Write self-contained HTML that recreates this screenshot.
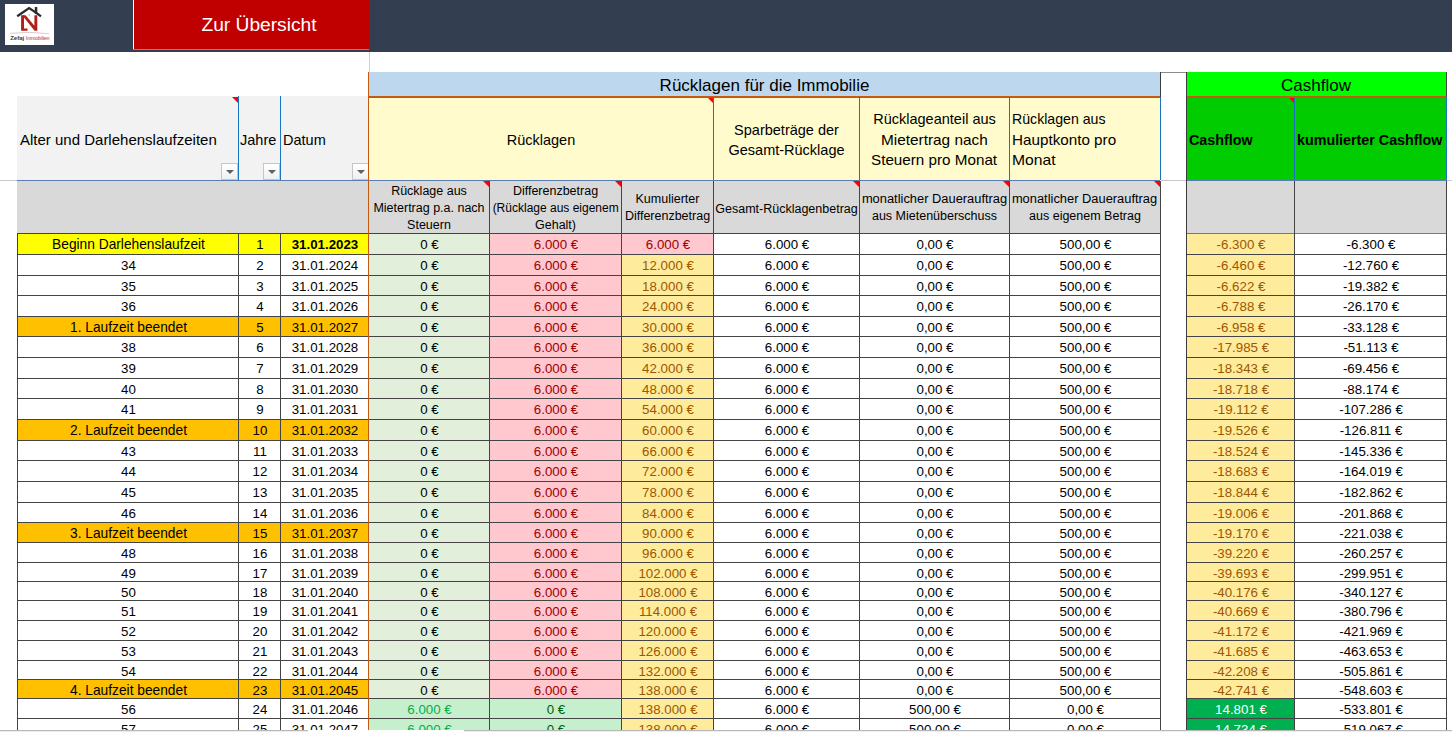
<!DOCTYPE html>
<html><head><meta charset="utf-8"><title>Rücklagen</title>
<style>
html,body{margin:0;padding:0;background:#fff;}
body{width:1452px;height:732px;overflow:hidden;position:relative;font-family:"Liberation Sans",sans-serif;}
#s>div{position:absolute;box-sizing:content-box;}
</style></head><body><div id="s">
<div style="left:0px;top:0px;width:1452px;height:52px;background:#333f50;"></div>
<div style="left:5px;top:4px;width:49px;height:41px;background:#fff;"></div>
<div style="left:133px;top:0px;width:1px;height:49px;background:#ffffff;"></div>
<div style="left:134px;top:0px;width:235px;height:49px;background:#c00000;"></div>
<div style="left:133px;top:49px;width:236px;height:1px;background:#8a8a8a;"></div>
<div style="left:150px;top:12.85px;width:218px;height:23px;font-size:19.2px;line-height:23px;text-align:center;color:#fff;font-weight:normal;white-space:nowrap;">Zur Übersicht</div>
<div style="left:369px;top:52px;width:1px;height:20px;background:#d0d0d0;"></div>
<div style="left:0px;top:180px;width:17px;height:1px;background:#c8c8c8;"></div>
<div style="left:1447px;top:180px;width:5px;height:1px;background:#c8c8c8;"></div>
<div style="left:1161px;top:180px;width:25px;height:1px;background:#c8c8c8;"></div>
<div style="left:369px;top:72px;width:791px;height:24px;background:#bdd7ee;"></div>
<div style="left:369px;top:76.11px;width:791px;height:20px;font-size:17px;line-height:20px;text-align:center;color:#000;font-weight:normal;white-space:nowrap;">Rücklagen für die Immobilie</div>
<div style="left:1187px;top:72px;width:259px;height:24px;background:#00ff00;"></div>
<div style="left:1186px;top:76.11px;width:260px;height:20px;font-size:17px;line-height:20px;text-align:center;color:#000;font-weight:normal;white-space:nowrap;">Cashflow</div>
<div style="left:1160px;top:72px;width:27px;height:1px;background:#8c8c8c;"></div>
<div style="left:17px;top:96px;width:351px;height:84px;background:#f2f2f2;"></div>
<div style="left:369px;top:97px;width:791px;height:83px;background:#fffbcc;"></div>
<div style="left:1187px;top:97px;width:259px;height:83px;background:#00cc00;"></div>
<div style="left:368px;top:96px;width:792px;height:2px;background:#c55a11;"></div>
<div style="left:1186px;top:96px;width:261px;height:2px;background:#c55a11;"></div>
<div style="left:238px;top:96px;width:1px;height:84px;background:#1a74c4;"></div>
<div style="left:280px;top:96px;width:1px;height:84px;background:#1a74c4;"></div>
<div style="left:713px;top:97px;width:1px;height:83px;background:#1a74c4;"></div>
<div style="left:859px;top:97px;width:1px;height:83px;background:#1a74c4;"></div>
<div style="left:1009px;top:97px;width:1px;height:83px;background:#1a74c4;"></div>
<div style="left:1160px;top:97px;width:1px;height:83px;background:#1a74c4;"></div>
<div style="left:1294px;top:97px;width:1px;height:83px;background:#1a74c4;"></div>
<div style="left:1446px;top:97px;width:1px;height:83px;background:#1a74c4;"></div>
<div style="left:17px;top:180px;width:1143px;height:1px;background:#5b7db5;"></div>
<div style="left:1186px;top:180px;width:261px;height:1px;background:#5b7db5;"></div>
<div style="left:20px;top:131.40px;width:218px;height:18px;font-size:15px;line-height:18px;text-align:left;color:#000;font-weight:normal;white-space:nowrap;">Alter und Darlehenslaufzeiten</div>
<div style="left:240px;top:132.08px;width:40px;height:17px;font-size:14.5px;line-height:17px;text-align:left;color:#000;font-weight:normal;white-space:nowrap;">Jahre</div>
<div style="left:283px;top:132.08px;width:85px;height:17px;font-size:14.5px;line-height:17px;text-align:left;color:#000;font-weight:normal;white-space:nowrap;">Datum</div>
<div style="left:369px;top:132.08px;width:344px;height:17px;font-size:14.5px;line-height:17px;text-align:center;color:#000;font-weight:normal;white-space:nowrap;">Rücklagen</div>
<div style="left:714px;top:119.53px;width:145px;height:41.0px;font-size:14.5px;line-height:20.5px;text-align:center;color:#000;font-weight:normal;white-space:nowrap;">Sparbeträge der<br>Gesamt-Rücklage</div>
<div style="left:860px;top:108.93px;width:149px;height:62.099999999999994px;font-size:14.5px;line-height:20.7px;text-align:center;color:#000;font-weight:normal;white-space:nowrap;">Rücklageanteil aus<br><span style="display:inline-block;transform:scaleX(1.06);transform-origin:center">Mietertrag nach</span><br><span style="display:inline-block;transform:scaleX(1.05);transform-origin:center">Steuern pro Monat</span></div>
<div style="left:1012px;top:108.93px;width:148px;height:62.099999999999994px;font-size:14.5px;line-height:20.7px;text-align:left;color:#000;font-weight:normal;white-space:nowrap;"><span style="display:inline-block;transform:scaleX(0.975);transform-origin:left">Rücklagen aus</span><br><span style="display:inline-block;transform:scaleX(1.05);transform-origin:left">Hauptkonto pro</span><br><span style="display:inline-block;transform:scaleX(1.08);transform-origin:left">Monat</span></div>
<div style="left:1189px;top:131.75px;width:105px;height:17px;font-size:14.3px;line-height:17px;text-align:left;color:#000;font-weight:bold;white-space:nowrap;">Cashflow</div>
<div style="left:1297px;top:131.75px;width:149px;height:17px;font-size:14.3px;line-height:17px;text-align:left;color:#000;font-weight:bold;white-space:nowrap;">kumulierter Cashflow</div>
<div style="left:232px;top:97px;width:0;height:0;border-top:6px solid #f00;border-left:6px solid transparent;"></div>
<div style="left:708px;top:98px;width:0;height:0;border-top:5px solid #f00;border-left:5px solid transparent;"></div>
<div style="left:1289px;top:98px;width:0;height:0;border-top:5px solid #f00;border-left:5px solid transparent;"></div>
<div style="left:221px;top:163px;width:15px;height:15px;border:1px solid #c6c6c6;background:linear-gradient(#fff,#eef0f3);"></div>
<div style="left:226px;top:170px;width:0;height:0;border-top:4px solid #606060;border-left:4px solid transparent;border-right:4px solid transparent;"></div>
<div style="left:263px;top:163px;width:15px;height:15px;border:1px solid #c6c6c6;background:linear-gradient(#fff,#eef0f3);"></div>
<div style="left:268px;top:170px;width:0;height:0;border-top:4px solid #606060;border-left:4px solid transparent;border-right:4px solid transparent;"></div>
<div style="left:352px;top:163px;width:15px;height:15px;border:1px solid #c6c6c6;background:linear-gradient(#fff,#eef0f3);"></div>
<div style="left:357px;top:170px;width:0;height:0;border-top:4px solid #606060;border-left:4px solid transparent;border-right:4px solid transparent;"></div>
<div style="left:17px;top:181px;width:351px;height:52px;background:#d9d9d9;"></div>
<div style="left:369px;top:181px;width:791px;height:52px;background:#d9d9d9;"></div>
<div style="left:1187px;top:181px;width:259px;height:52px;background:#d9d9d9;"></div>
<div style="left:369px;top:182.87px;width:120px;height:51px;font-size:12.5px;line-height:17px;text-align:center;color:#000;font-weight:normal;white-space:nowrap;">Rücklage aus<br>Mietertrag p.a. nach<br>Steuern</div>
<div style="left:490px;top:182.87px;width:131px;height:51px;font-size:12.5px;line-height:17px;text-align:center;color:#000;font-weight:normal;white-space:nowrap;">Differenzbetrag<br><span style="display:inline-block;transform:scaleX(0.96);transform-origin:center">(Rücklage aus eigenem</span><br>Gehalt)</div>
<div style="left:622px;top:191.37px;width:91px;height:34px;font-size:12.5px;line-height:17px;text-align:center;color:#000;font-weight:normal;white-space:nowrap;">Kumulierter<br>Differenzbetrag</div>
<div style="left:714px;top:201.77px;width:145px;height:15px;font-size:12.5px;line-height:15px;text-align:center;color:#000;font-weight:normal;white-space:nowrap;">Gesamt-Rücklagenbetrag</div>
<div style="left:860px;top:191.37px;width:149px;height:34px;font-size:12.5px;line-height:17px;text-align:center;color:#000;font-weight:normal;white-space:nowrap;"><span style="display:inline-block;transform:scaleX(1.03);transform-origin:center">monatlicher Dauerauftrag</span><br>aus Mietenüberschuss</div>
<div style="left:1010px;top:191.37px;width:150px;height:34px;font-size:12.5px;line-height:17px;text-align:center;color:#000;font-weight:normal;white-space:nowrap;"><span style="display:inline-block;transform:scaleX(1.03);transform-origin:center">monatlicher Dauerauftrag</span><br>aus eigenem Betrag</div>
<div style="left:489px;top:181px;width:1px;height:52px;background:#444444;"></div>
<div style="left:621px;top:181px;width:1px;height:52px;background:#444444;"></div>
<div style="left:713px;top:181px;width:1px;height:52px;background:#444444;"></div>
<div style="left:859px;top:181px;width:1px;height:52px;background:#444444;"></div>
<div style="left:1009px;top:181px;width:1px;height:52px;background:#444444;"></div>
<div style="left:483px;top:181px;width:0;height:0;border-top:6px solid #f00;border-left:6px solid transparent;"></div>
<div style="left:615px;top:181px;width:0;height:0;border-top:6px solid #f00;border-left:6px solid transparent;"></div>
<div style="left:853px;top:181px;width:0;height:0;border-top:6px solid #f00;border-left:6px solid transparent;"></div>
<div style="left:1003px;top:181px;width:0;height:0;border-top:6px solid #f00;border-left:6px solid transparent;"></div>
<div style="left:1154px;top:181px;width:0;height:0;border-top:6px solid #f00;border-left:6px solid transparent;"></div>
<div style="left:17px;top:233px;width:351px;height:21px;background:#ffff00;"></div>
<div style="left:369px;top:233px;width:120px;height:21px;background:#e2efda;"></div>
<div style="left:489px;top:233px;width:132px;height:21px;background:#ffc7ce;"></div>
<div style="left:621px;top:233px;width:92px;height:21px;background:#ffc7ce;"></div>
<div style="left:1186px;top:233px;width:108px;height:21px;background:#ffeb9c;"></div>
<div style="left:18px;top:237.24px;width:221px;height:16px;font-size:13.75px;line-height:16px;text-align:center;color:#000;font-weight:normal;white-space:nowrap;">Beginn Darlehenslaufzeit</div>
<div style="left:239px;top:237.39px;width:42px;height:16px;font-size:13.3px;line-height:16px;text-align:center;color:#000;font-weight:normal;white-space:nowrap;">1</div>
<div style="left:281px;top:237.39px;width:88px;height:16px;font-size:13.3px;line-height:16px;text-align:center;color:#000;font-weight:bold;white-space:nowrap;">31.01.2023</div>
<div style="left:369px;top:237.39px;width:121px;height:16px;font-size:13.3px;line-height:16px;text-align:center;color:#000;font-weight:normal;white-space:nowrap;">0 €</div>
<div style="left:490px;top:237.39px;width:132px;height:16px;font-size:13.3px;line-height:16px;text-align:center;color:#9c0006;font-weight:normal;white-space:nowrap;">6.000 €</div>
<div style="left:622px;top:237.39px;width:92px;height:16px;font-size:13.3px;line-height:16px;text-align:center;color:#9c0006;font-weight:normal;white-space:nowrap;">6.000 €</div>
<div style="left:714px;top:237.39px;width:146px;height:16px;font-size:13.3px;line-height:16px;text-align:center;color:#000;font-weight:normal;white-space:nowrap;">6.000 €</div>
<div style="left:860px;top:237.39px;width:150px;height:16px;font-size:13.3px;line-height:16px;text-align:center;color:#000;font-weight:normal;white-space:nowrap;">0,00 €</div>
<div style="left:1010px;top:237.39px;width:151px;height:16px;font-size:13.3px;line-height:16px;text-align:center;color:#000;font-weight:normal;white-space:nowrap;">500,00 €</div>
<div style="left:1187px;top:237.39px;width:108px;height:16px;font-size:13.3px;line-height:16px;text-align:center;color:#9c5700;font-weight:normal;white-space:nowrap;">-6.300 €</div>
<div style="left:1295px;top:237.39px;width:152px;height:16px;font-size:13.3px;line-height:16px;text-align:center;color:#000;font-weight:normal;white-space:nowrap;">-6.300 €</div>
<div style="left:369px;top:254px;width:120px;height:21px;background:#e2efda;"></div>
<div style="left:489px;top:254px;width:132px;height:21px;background:#ffc7ce;"></div>
<div style="left:621px;top:254px;width:92px;height:21px;background:#ffeb9c;"></div>
<div style="left:1186px;top:254px;width:108px;height:21px;background:#ffeb9c;"></div>
<div style="left:18px;top:258.39px;width:221px;height:16px;font-size:13.3px;line-height:16px;text-align:center;color:#000;font-weight:normal;white-space:nowrap;">34</div>
<div style="left:239px;top:258.39px;width:42px;height:16px;font-size:13.3px;line-height:16px;text-align:center;color:#000;font-weight:normal;white-space:nowrap;">2</div>
<div style="left:281px;top:258.39px;width:88px;height:16px;font-size:13.3px;line-height:16px;text-align:center;color:#000;font-weight:normal;white-space:nowrap;">31.01.2024</div>
<div style="left:369px;top:258.39px;width:121px;height:16px;font-size:13.3px;line-height:16px;text-align:center;color:#000;font-weight:normal;white-space:nowrap;">0 €</div>
<div style="left:490px;top:258.39px;width:132px;height:16px;font-size:13.3px;line-height:16px;text-align:center;color:#9c0006;font-weight:normal;white-space:nowrap;">6.000 €</div>
<div style="left:622px;top:258.39px;width:92px;height:16px;font-size:13.3px;line-height:16px;text-align:center;color:#9c5700;font-weight:normal;white-space:nowrap;">12.000 €</div>
<div style="left:714px;top:258.39px;width:146px;height:16px;font-size:13.3px;line-height:16px;text-align:center;color:#000;font-weight:normal;white-space:nowrap;">6.000 €</div>
<div style="left:860px;top:258.39px;width:150px;height:16px;font-size:13.3px;line-height:16px;text-align:center;color:#000;font-weight:normal;white-space:nowrap;">0,00 €</div>
<div style="left:1010px;top:258.39px;width:151px;height:16px;font-size:13.3px;line-height:16px;text-align:center;color:#000;font-weight:normal;white-space:nowrap;">500,00 €</div>
<div style="left:1187px;top:258.39px;width:108px;height:16px;font-size:13.3px;line-height:16px;text-align:center;color:#9c5700;font-weight:normal;white-space:nowrap;">-6.460 €</div>
<div style="left:1295px;top:258.39px;width:152px;height:16px;font-size:13.3px;line-height:16px;text-align:center;color:#000;font-weight:normal;white-space:nowrap;">-12.760 €</div>
<div style="left:369px;top:275px;width:120px;height:20px;background:#e2efda;"></div>
<div style="left:489px;top:275px;width:132px;height:20px;background:#ffc7ce;"></div>
<div style="left:621px;top:275px;width:92px;height:20px;background:#ffeb9c;"></div>
<div style="left:1186px;top:275px;width:108px;height:20px;background:#ffeb9c;"></div>
<div style="left:18px;top:279.19px;width:221px;height:16px;font-size:13.3px;line-height:16px;text-align:center;color:#000;font-weight:normal;white-space:nowrap;">35</div>
<div style="left:239px;top:279.19px;width:42px;height:16px;font-size:13.3px;line-height:16px;text-align:center;color:#000;font-weight:normal;white-space:nowrap;">3</div>
<div style="left:281px;top:279.19px;width:88px;height:16px;font-size:13.3px;line-height:16px;text-align:center;color:#000;font-weight:normal;white-space:nowrap;">31.01.2025</div>
<div style="left:369px;top:279.19px;width:121px;height:16px;font-size:13.3px;line-height:16px;text-align:center;color:#000;font-weight:normal;white-space:nowrap;">0 €</div>
<div style="left:490px;top:279.19px;width:132px;height:16px;font-size:13.3px;line-height:16px;text-align:center;color:#9c0006;font-weight:normal;white-space:nowrap;">6.000 €</div>
<div style="left:622px;top:279.19px;width:92px;height:16px;font-size:13.3px;line-height:16px;text-align:center;color:#9c5700;font-weight:normal;white-space:nowrap;">18.000 €</div>
<div style="left:714px;top:279.19px;width:146px;height:16px;font-size:13.3px;line-height:16px;text-align:center;color:#000;font-weight:normal;white-space:nowrap;">6.000 €</div>
<div style="left:860px;top:279.19px;width:150px;height:16px;font-size:13.3px;line-height:16px;text-align:center;color:#000;font-weight:normal;white-space:nowrap;">0,00 €</div>
<div style="left:1010px;top:279.19px;width:151px;height:16px;font-size:13.3px;line-height:16px;text-align:center;color:#000;font-weight:normal;white-space:nowrap;">500,00 €</div>
<div style="left:1187px;top:279.19px;width:108px;height:16px;font-size:13.3px;line-height:16px;text-align:center;color:#9c5700;font-weight:normal;white-space:nowrap;">-6.622 €</div>
<div style="left:1295px;top:279.19px;width:152px;height:16px;font-size:13.3px;line-height:16px;text-align:center;color:#000;font-weight:normal;white-space:nowrap;">-19.382 €</div>
<div style="left:369px;top:295px;width:120px;height:21px;background:#e2efda;"></div>
<div style="left:489px;top:295px;width:132px;height:21px;background:#ffc7ce;"></div>
<div style="left:621px;top:295px;width:92px;height:21px;background:#ffeb9c;"></div>
<div style="left:1186px;top:295px;width:108px;height:21px;background:#ffeb9c;"></div>
<div style="left:18px;top:299.39px;width:221px;height:16px;font-size:13.3px;line-height:16px;text-align:center;color:#000;font-weight:normal;white-space:nowrap;">36</div>
<div style="left:239px;top:299.39px;width:42px;height:16px;font-size:13.3px;line-height:16px;text-align:center;color:#000;font-weight:normal;white-space:nowrap;">4</div>
<div style="left:281px;top:299.39px;width:88px;height:16px;font-size:13.3px;line-height:16px;text-align:center;color:#000;font-weight:normal;white-space:nowrap;">31.01.2026</div>
<div style="left:369px;top:299.39px;width:121px;height:16px;font-size:13.3px;line-height:16px;text-align:center;color:#000;font-weight:normal;white-space:nowrap;">0 €</div>
<div style="left:490px;top:299.39px;width:132px;height:16px;font-size:13.3px;line-height:16px;text-align:center;color:#9c0006;font-weight:normal;white-space:nowrap;">6.000 €</div>
<div style="left:622px;top:299.39px;width:92px;height:16px;font-size:13.3px;line-height:16px;text-align:center;color:#9c5700;font-weight:normal;white-space:nowrap;">24.000 €</div>
<div style="left:714px;top:299.39px;width:146px;height:16px;font-size:13.3px;line-height:16px;text-align:center;color:#000;font-weight:normal;white-space:nowrap;">6.000 €</div>
<div style="left:860px;top:299.39px;width:150px;height:16px;font-size:13.3px;line-height:16px;text-align:center;color:#000;font-weight:normal;white-space:nowrap;">0,00 €</div>
<div style="left:1010px;top:299.39px;width:151px;height:16px;font-size:13.3px;line-height:16px;text-align:center;color:#000;font-weight:normal;white-space:nowrap;">500,00 €</div>
<div style="left:1187px;top:299.39px;width:108px;height:16px;font-size:13.3px;line-height:16px;text-align:center;color:#9c5700;font-weight:normal;white-space:nowrap;">-6.788 €</div>
<div style="left:1295px;top:299.39px;width:152px;height:16px;font-size:13.3px;line-height:16px;text-align:center;color:#000;font-weight:normal;white-space:nowrap;">-26.170 €</div>
<div style="left:17px;top:316px;width:351px;height:20px;background:#ffc000;"></div>
<div style="left:369px;top:316px;width:120px;height:20px;background:#e2efda;"></div>
<div style="left:489px;top:316px;width:132px;height:20px;background:#ffc7ce;"></div>
<div style="left:621px;top:316px;width:92px;height:20px;background:#ffeb9c;"></div>
<div style="left:1186px;top:316px;width:108px;height:20px;background:#ffeb9c;"></div>
<div style="left:18px;top:320.04px;width:221px;height:16px;font-size:13.75px;line-height:16px;text-align:center;color:#000;font-weight:normal;white-space:nowrap;">1. Laufzeit beendet</div>
<div style="left:239px;top:320.19px;width:42px;height:16px;font-size:13.3px;line-height:16px;text-align:center;color:#000;font-weight:normal;white-space:nowrap;">5</div>
<div style="left:281px;top:320.19px;width:88px;height:16px;font-size:13.3px;line-height:16px;text-align:center;color:#000;font-weight:normal;white-space:nowrap;">31.01.2027</div>
<div style="left:369px;top:320.19px;width:121px;height:16px;font-size:13.3px;line-height:16px;text-align:center;color:#000;font-weight:normal;white-space:nowrap;">0 €</div>
<div style="left:490px;top:320.19px;width:132px;height:16px;font-size:13.3px;line-height:16px;text-align:center;color:#9c0006;font-weight:normal;white-space:nowrap;">6.000 €</div>
<div style="left:622px;top:320.19px;width:92px;height:16px;font-size:13.3px;line-height:16px;text-align:center;color:#9c5700;font-weight:normal;white-space:nowrap;">30.000 €</div>
<div style="left:714px;top:320.19px;width:146px;height:16px;font-size:13.3px;line-height:16px;text-align:center;color:#000;font-weight:normal;white-space:nowrap;">6.000 €</div>
<div style="left:860px;top:320.19px;width:150px;height:16px;font-size:13.3px;line-height:16px;text-align:center;color:#000;font-weight:normal;white-space:nowrap;">0,00 €</div>
<div style="left:1010px;top:320.19px;width:151px;height:16px;font-size:13.3px;line-height:16px;text-align:center;color:#000;font-weight:normal;white-space:nowrap;">500,00 €</div>
<div style="left:1187px;top:320.19px;width:108px;height:16px;font-size:13.3px;line-height:16px;text-align:center;color:#9c5700;font-weight:normal;white-space:nowrap;">-6.958 €</div>
<div style="left:1295px;top:320.19px;width:152px;height:16px;font-size:13.3px;line-height:16px;text-align:center;color:#000;font-weight:normal;white-space:nowrap;">-33.128 €</div>
<div style="left:369px;top:336px;width:120px;height:21px;background:#e2efda;"></div>
<div style="left:489px;top:336px;width:132px;height:21px;background:#ffc7ce;"></div>
<div style="left:621px;top:336px;width:92px;height:21px;background:#ffeb9c;"></div>
<div style="left:1186px;top:336px;width:108px;height:21px;background:#ffeb9c;"></div>
<div style="left:18px;top:340.39px;width:221px;height:16px;font-size:13.3px;line-height:16px;text-align:center;color:#000;font-weight:normal;white-space:nowrap;">38</div>
<div style="left:239px;top:340.39px;width:42px;height:16px;font-size:13.3px;line-height:16px;text-align:center;color:#000;font-weight:normal;white-space:nowrap;">6</div>
<div style="left:281px;top:340.39px;width:88px;height:16px;font-size:13.3px;line-height:16px;text-align:center;color:#000;font-weight:normal;white-space:nowrap;">31.01.2028</div>
<div style="left:369px;top:340.39px;width:121px;height:16px;font-size:13.3px;line-height:16px;text-align:center;color:#000;font-weight:normal;white-space:nowrap;">0 €</div>
<div style="left:490px;top:340.39px;width:132px;height:16px;font-size:13.3px;line-height:16px;text-align:center;color:#9c0006;font-weight:normal;white-space:nowrap;">6.000 €</div>
<div style="left:622px;top:340.39px;width:92px;height:16px;font-size:13.3px;line-height:16px;text-align:center;color:#9c5700;font-weight:normal;white-space:nowrap;">36.000 €</div>
<div style="left:714px;top:340.39px;width:146px;height:16px;font-size:13.3px;line-height:16px;text-align:center;color:#000;font-weight:normal;white-space:nowrap;">6.000 €</div>
<div style="left:860px;top:340.39px;width:150px;height:16px;font-size:13.3px;line-height:16px;text-align:center;color:#000;font-weight:normal;white-space:nowrap;">0,00 €</div>
<div style="left:1010px;top:340.39px;width:151px;height:16px;font-size:13.3px;line-height:16px;text-align:center;color:#000;font-weight:normal;white-space:nowrap;">500,00 €</div>
<div style="left:1187px;top:340.39px;width:108px;height:16px;font-size:13.3px;line-height:16px;text-align:center;color:#9c5700;font-weight:normal;white-space:nowrap;">-17.985 €</div>
<div style="left:1295px;top:340.39px;width:152px;height:16px;font-size:13.3px;line-height:16px;text-align:center;color:#000;font-weight:normal;white-space:nowrap;">-51.113 €</div>
<div style="left:369px;top:357px;width:120px;height:21px;background:#e2efda;"></div>
<div style="left:489px;top:357px;width:132px;height:21px;background:#ffc7ce;"></div>
<div style="left:621px;top:357px;width:92px;height:21px;background:#ffeb9c;"></div>
<div style="left:1186px;top:357px;width:108px;height:21px;background:#ffeb9c;"></div>
<div style="left:18px;top:361.39px;width:221px;height:16px;font-size:13.3px;line-height:16px;text-align:center;color:#000;font-weight:normal;white-space:nowrap;">39</div>
<div style="left:239px;top:361.39px;width:42px;height:16px;font-size:13.3px;line-height:16px;text-align:center;color:#000;font-weight:normal;white-space:nowrap;">7</div>
<div style="left:281px;top:361.39px;width:88px;height:16px;font-size:13.3px;line-height:16px;text-align:center;color:#000;font-weight:normal;white-space:nowrap;">31.01.2029</div>
<div style="left:369px;top:361.39px;width:121px;height:16px;font-size:13.3px;line-height:16px;text-align:center;color:#000;font-weight:normal;white-space:nowrap;">0 €</div>
<div style="left:490px;top:361.39px;width:132px;height:16px;font-size:13.3px;line-height:16px;text-align:center;color:#9c0006;font-weight:normal;white-space:nowrap;">6.000 €</div>
<div style="left:622px;top:361.39px;width:92px;height:16px;font-size:13.3px;line-height:16px;text-align:center;color:#9c5700;font-weight:normal;white-space:nowrap;">42.000 €</div>
<div style="left:714px;top:361.39px;width:146px;height:16px;font-size:13.3px;line-height:16px;text-align:center;color:#000;font-weight:normal;white-space:nowrap;">6.000 €</div>
<div style="left:860px;top:361.39px;width:150px;height:16px;font-size:13.3px;line-height:16px;text-align:center;color:#000;font-weight:normal;white-space:nowrap;">0,00 €</div>
<div style="left:1010px;top:361.39px;width:151px;height:16px;font-size:13.3px;line-height:16px;text-align:center;color:#000;font-weight:normal;white-space:nowrap;">500,00 €</div>
<div style="left:1187px;top:361.39px;width:108px;height:16px;font-size:13.3px;line-height:16px;text-align:center;color:#9c5700;font-weight:normal;white-space:nowrap;">-18.343 €</div>
<div style="left:1295px;top:361.39px;width:152px;height:16px;font-size:13.3px;line-height:16px;text-align:center;color:#000;font-weight:normal;white-space:nowrap;">-69.456 €</div>
<div style="left:369px;top:378px;width:120px;height:20px;background:#e2efda;"></div>
<div style="left:489px;top:378px;width:132px;height:20px;background:#ffc7ce;"></div>
<div style="left:621px;top:378px;width:92px;height:20px;background:#ffeb9c;"></div>
<div style="left:1186px;top:378px;width:108px;height:20px;background:#ffeb9c;"></div>
<div style="left:18px;top:382.19px;width:221px;height:16px;font-size:13.3px;line-height:16px;text-align:center;color:#000;font-weight:normal;white-space:nowrap;">40</div>
<div style="left:239px;top:382.19px;width:42px;height:16px;font-size:13.3px;line-height:16px;text-align:center;color:#000;font-weight:normal;white-space:nowrap;">8</div>
<div style="left:281px;top:382.19px;width:88px;height:16px;font-size:13.3px;line-height:16px;text-align:center;color:#000;font-weight:normal;white-space:nowrap;">31.01.2030</div>
<div style="left:369px;top:382.19px;width:121px;height:16px;font-size:13.3px;line-height:16px;text-align:center;color:#000;font-weight:normal;white-space:nowrap;">0 €</div>
<div style="left:490px;top:382.19px;width:132px;height:16px;font-size:13.3px;line-height:16px;text-align:center;color:#9c0006;font-weight:normal;white-space:nowrap;">6.000 €</div>
<div style="left:622px;top:382.19px;width:92px;height:16px;font-size:13.3px;line-height:16px;text-align:center;color:#9c5700;font-weight:normal;white-space:nowrap;">48.000 €</div>
<div style="left:714px;top:382.19px;width:146px;height:16px;font-size:13.3px;line-height:16px;text-align:center;color:#000;font-weight:normal;white-space:nowrap;">6.000 €</div>
<div style="left:860px;top:382.19px;width:150px;height:16px;font-size:13.3px;line-height:16px;text-align:center;color:#000;font-weight:normal;white-space:nowrap;">0,00 €</div>
<div style="left:1010px;top:382.19px;width:151px;height:16px;font-size:13.3px;line-height:16px;text-align:center;color:#000;font-weight:normal;white-space:nowrap;">500,00 €</div>
<div style="left:1187px;top:382.19px;width:108px;height:16px;font-size:13.3px;line-height:16px;text-align:center;color:#9c5700;font-weight:normal;white-space:nowrap;">-18.718 €</div>
<div style="left:1295px;top:382.19px;width:152px;height:16px;font-size:13.3px;line-height:16px;text-align:center;color:#000;font-weight:normal;white-space:nowrap;">-88.174 €</div>
<div style="left:369px;top:398px;width:120px;height:21px;background:#e2efda;"></div>
<div style="left:489px;top:398px;width:132px;height:21px;background:#ffc7ce;"></div>
<div style="left:621px;top:398px;width:92px;height:21px;background:#ffeb9c;"></div>
<div style="left:1186px;top:398px;width:108px;height:21px;background:#ffeb9c;"></div>
<div style="left:18px;top:402.39px;width:221px;height:16px;font-size:13.3px;line-height:16px;text-align:center;color:#000;font-weight:normal;white-space:nowrap;">41</div>
<div style="left:239px;top:402.39px;width:42px;height:16px;font-size:13.3px;line-height:16px;text-align:center;color:#000;font-weight:normal;white-space:nowrap;">9</div>
<div style="left:281px;top:402.39px;width:88px;height:16px;font-size:13.3px;line-height:16px;text-align:center;color:#000;font-weight:normal;white-space:nowrap;">31.01.2031</div>
<div style="left:369px;top:402.39px;width:121px;height:16px;font-size:13.3px;line-height:16px;text-align:center;color:#000;font-weight:normal;white-space:nowrap;">0 €</div>
<div style="left:490px;top:402.39px;width:132px;height:16px;font-size:13.3px;line-height:16px;text-align:center;color:#9c0006;font-weight:normal;white-space:nowrap;">6.000 €</div>
<div style="left:622px;top:402.39px;width:92px;height:16px;font-size:13.3px;line-height:16px;text-align:center;color:#9c5700;font-weight:normal;white-space:nowrap;">54.000 €</div>
<div style="left:714px;top:402.39px;width:146px;height:16px;font-size:13.3px;line-height:16px;text-align:center;color:#000;font-weight:normal;white-space:nowrap;">6.000 €</div>
<div style="left:860px;top:402.39px;width:150px;height:16px;font-size:13.3px;line-height:16px;text-align:center;color:#000;font-weight:normal;white-space:nowrap;">0,00 €</div>
<div style="left:1010px;top:402.39px;width:151px;height:16px;font-size:13.3px;line-height:16px;text-align:center;color:#000;font-weight:normal;white-space:nowrap;">500,00 €</div>
<div style="left:1187px;top:402.39px;width:108px;height:16px;font-size:13.3px;line-height:16px;text-align:center;color:#9c5700;font-weight:normal;white-space:nowrap;">-19.112 €</div>
<div style="left:1295px;top:402.39px;width:152px;height:16px;font-size:13.3px;line-height:16px;text-align:center;color:#000;font-weight:normal;white-space:nowrap;">-107.286 €</div>
<div style="left:17px;top:419px;width:351px;height:21px;background:#ffc000;"></div>
<div style="left:369px;top:419px;width:120px;height:21px;background:#e2efda;"></div>
<div style="left:489px;top:419px;width:132px;height:21px;background:#ffc7ce;"></div>
<div style="left:621px;top:419px;width:92px;height:21px;background:#ffeb9c;"></div>
<div style="left:1186px;top:419px;width:108px;height:21px;background:#ffeb9c;"></div>
<div style="left:18px;top:423.24px;width:221px;height:16px;font-size:13.75px;line-height:16px;text-align:center;color:#000;font-weight:normal;white-space:nowrap;">2. Laufzeit beendet</div>
<div style="left:239px;top:423.39px;width:42px;height:16px;font-size:13.3px;line-height:16px;text-align:center;color:#000;font-weight:normal;white-space:nowrap;">10</div>
<div style="left:281px;top:423.39px;width:88px;height:16px;font-size:13.3px;line-height:16px;text-align:center;color:#000;font-weight:normal;white-space:nowrap;">31.01.2032</div>
<div style="left:369px;top:423.39px;width:121px;height:16px;font-size:13.3px;line-height:16px;text-align:center;color:#000;font-weight:normal;white-space:nowrap;">0 €</div>
<div style="left:490px;top:423.39px;width:132px;height:16px;font-size:13.3px;line-height:16px;text-align:center;color:#9c0006;font-weight:normal;white-space:nowrap;">6.000 €</div>
<div style="left:622px;top:423.39px;width:92px;height:16px;font-size:13.3px;line-height:16px;text-align:center;color:#9c5700;font-weight:normal;white-space:nowrap;">60.000 €</div>
<div style="left:714px;top:423.39px;width:146px;height:16px;font-size:13.3px;line-height:16px;text-align:center;color:#000;font-weight:normal;white-space:nowrap;">6.000 €</div>
<div style="left:860px;top:423.39px;width:150px;height:16px;font-size:13.3px;line-height:16px;text-align:center;color:#000;font-weight:normal;white-space:nowrap;">0,00 €</div>
<div style="left:1010px;top:423.39px;width:151px;height:16px;font-size:13.3px;line-height:16px;text-align:center;color:#000;font-weight:normal;white-space:nowrap;">500,00 €</div>
<div style="left:1187px;top:423.39px;width:108px;height:16px;font-size:13.3px;line-height:16px;text-align:center;color:#9c5700;font-weight:normal;white-space:nowrap;">-19.526 €</div>
<div style="left:1295px;top:423.39px;width:152px;height:16px;font-size:13.3px;line-height:16px;text-align:center;color:#000;font-weight:normal;white-space:nowrap;">-126.811 €</div>
<div style="left:369px;top:440px;width:120px;height:20px;background:#e2efda;"></div>
<div style="left:489px;top:440px;width:132px;height:20px;background:#ffc7ce;"></div>
<div style="left:621px;top:440px;width:92px;height:20px;background:#ffeb9c;"></div>
<div style="left:1186px;top:440px;width:108px;height:20px;background:#ffeb9c;"></div>
<div style="left:18px;top:444.19px;width:221px;height:16px;font-size:13.3px;line-height:16px;text-align:center;color:#000;font-weight:normal;white-space:nowrap;">43</div>
<div style="left:239px;top:444.19px;width:42px;height:16px;font-size:13.3px;line-height:16px;text-align:center;color:#000;font-weight:normal;white-space:nowrap;">11</div>
<div style="left:281px;top:444.19px;width:88px;height:16px;font-size:13.3px;line-height:16px;text-align:center;color:#000;font-weight:normal;white-space:nowrap;">31.01.2033</div>
<div style="left:369px;top:444.19px;width:121px;height:16px;font-size:13.3px;line-height:16px;text-align:center;color:#000;font-weight:normal;white-space:nowrap;">0 €</div>
<div style="left:490px;top:444.19px;width:132px;height:16px;font-size:13.3px;line-height:16px;text-align:center;color:#9c0006;font-weight:normal;white-space:nowrap;">6.000 €</div>
<div style="left:622px;top:444.19px;width:92px;height:16px;font-size:13.3px;line-height:16px;text-align:center;color:#9c5700;font-weight:normal;white-space:nowrap;">66.000 €</div>
<div style="left:714px;top:444.19px;width:146px;height:16px;font-size:13.3px;line-height:16px;text-align:center;color:#000;font-weight:normal;white-space:nowrap;">6.000 €</div>
<div style="left:860px;top:444.19px;width:150px;height:16px;font-size:13.3px;line-height:16px;text-align:center;color:#000;font-weight:normal;white-space:nowrap;">0,00 €</div>
<div style="left:1010px;top:444.19px;width:151px;height:16px;font-size:13.3px;line-height:16px;text-align:center;color:#000;font-weight:normal;white-space:nowrap;">500,00 €</div>
<div style="left:1187px;top:444.19px;width:108px;height:16px;font-size:13.3px;line-height:16px;text-align:center;color:#9c5700;font-weight:normal;white-space:nowrap;">-18.524 €</div>
<div style="left:1295px;top:444.19px;width:152px;height:16px;font-size:13.3px;line-height:16px;text-align:center;color:#000;font-weight:normal;white-space:nowrap;">-145.336 €</div>
<div style="left:369px;top:460px;width:120px;height:21px;background:#e2efda;"></div>
<div style="left:489px;top:460px;width:132px;height:21px;background:#ffc7ce;"></div>
<div style="left:621px;top:460px;width:92px;height:21px;background:#ffeb9c;"></div>
<div style="left:1186px;top:460px;width:108px;height:21px;background:#ffeb9c;"></div>
<div style="left:18px;top:464.39px;width:221px;height:16px;font-size:13.3px;line-height:16px;text-align:center;color:#000;font-weight:normal;white-space:nowrap;">44</div>
<div style="left:239px;top:464.39px;width:42px;height:16px;font-size:13.3px;line-height:16px;text-align:center;color:#000;font-weight:normal;white-space:nowrap;">12</div>
<div style="left:281px;top:464.39px;width:88px;height:16px;font-size:13.3px;line-height:16px;text-align:center;color:#000;font-weight:normal;white-space:nowrap;">31.01.2034</div>
<div style="left:369px;top:464.39px;width:121px;height:16px;font-size:13.3px;line-height:16px;text-align:center;color:#000;font-weight:normal;white-space:nowrap;">0 €</div>
<div style="left:490px;top:464.39px;width:132px;height:16px;font-size:13.3px;line-height:16px;text-align:center;color:#9c0006;font-weight:normal;white-space:nowrap;">6.000 €</div>
<div style="left:622px;top:464.39px;width:92px;height:16px;font-size:13.3px;line-height:16px;text-align:center;color:#9c5700;font-weight:normal;white-space:nowrap;">72.000 €</div>
<div style="left:714px;top:464.39px;width:146px;height:16px;font-size:13.3px;line-height:16px;text-align:center;color:#000;font-weight:normal;white-space:nowrap;">6.000 €</div>
<div style="left:860px;top:464.39px;width:150px;height:16px;font-size:13.3px;line-height:16px;text-align:center;color:#000;font-weight:normal;white-space:nowrap;">0,00 €</div>
<div style="left:1010px;top:464.39px;width:151px;height:16px;font-size:13.3px;line-height:16px;text-align:center;color:#000;font-weight:normal;white-space:nowrap;">500,00 €</div>
<div style="left:1187px;top:464.39px;width:108px;height:16px;font-size:13.3px;line-height:16px;text-align:center;color:#9c5700;font-weight:normal;white-space:nowrap;">-18.683 €</div>
<div style="left:1295px;top:464.39px;width:152px;height:16px;font-size:13.3px;line-height:16px;text-align:center;color:#000;font-weight:normal;white-space:nowrap;">-164.019 €</div>
<div style="left:369px;top:481px;width:120px;height:21px;background:#e2efda;"></div>
<div style="left:489px;top:481px;width:132px;height:21px;background:#ffc7ce;"></div>
<div style="left:621px;top:481px;width:92px;height:21px;background:#ffeb9c;"></div>
<div style="left:1186px;top:481px;width:108px;height:21px;background:#ffeb9c;"></div>
<div style="left:18px;top:485.39px;width:221px;height:16px;font-size:13.3px;line-height:16px;text-align:center;color:#000;font-weight:normal;white-space:nowrap;">45</div>
<div style="left:239px;top:485.39px;width:42px;height:16px;font-size:13.3px;line-height:16px;text-align:center;color:#000;font-weight:normal;white-space:nowrap;">13</div>
<div style="left:281px;top:485.39px;width:88px;height:16px;font-size:13.3px;line-height:16px;text-align:center;color:#000;font-weight:normal;white-space:nowrap;">31.01.2035</div>
<div style="left:369px;top:485.39px;width:121px;height:16px;font-size:13.3px;line-height:16px;text-align:center;color:#000;font-weight:normal;white-space:nowrap;">0 €</div>
<div style="left:490px;top:485.39px;width:132px;height:16px;font-size:13.3px;line-height:16px;text-align:center;color:#9c0006;font-weight:normal;white-space:nowrap;">6.000 €</div>
<div style="left:622px;top:485.39px;width:92px;height:16px;font-size:13.3px;line-height:16px;text-align:center;color:#9c5700;font-weight:normal;white-space:nowrap;">78.000 €</div>
<div style="left:714px;top:485.39px;width:146px;height:16px;font-size:13.3px;line-height:16px;text-align:center;color:#000;font-weight:normal;white-space:nowrap;">6.000 €</div>
<div style="left:860px;top:485.39px;width:150px;height:16px;font-size:13.3px;line-height:16px;text-align:center;color:#000;font-weight:normal;white-space:nowrap;">0,00 €</div>
<div style="left:1010px;top:485.39px;width:151px;height:16px;font-size:13.3px;line-height:16px;text-align:center;color:#000;font-weight:normal;white-space:nowrap;">500,00 €</div>
<div style="left:1187px;top:485.39px;width:108px;height:16px;font-size:13.3px;line-height:16px;text-align:center;color:#9c5700;font-weight:normal;white-space:nowrap;">-18.844 €</div>
<div style="left:1295px;top:485.39px;width:152px;height:16px;font-size:13.3px;line-height:16px;text-align:center;color:#000;font-weight:normal;white-space:nowrap;">-182.862 €</div>
<div style="left:369px;top:502px;width:120px;height:20px;background:#e2efda;"></div>
<div style="left:489px;top:502px;width:132px;height:20px;background:#ffc7ce;"></div>
<div style="left:621px;top:502px;width:92px;height:20px;background:#ffeb9c;"></div>
<div style="left:1186px;top:502px;width:108px;height:20px;background:#ffeb9c;"></div>
<div style="left:18px;top:506.19px;width:221px;height:16px;font-size:13.3px;line-height:16px;text-align:center;color:#000;font-weight:normal;white-space:nowrap;">46</div>
<div style="left:239px;top:506.19px;width:42px;height:16px;font-size:13.3px;line-height:16px;text-align:center;color:#000;font-weight:normal;white-space:nowrap;">14</div>
<div style="left:281px;top:506.19px;width:88px;height:16px;font-size:13.3px;line-height:16px;text-align:center;color:#000;font-weight:normal;white-space:nowrap;">31.01.2036</div>
<div style="left:369px;top:506.19px;width:121px;height:16px;font-size:13.3px;line-height:16px;text-align:center;color:#000;font-weight:normal;white-space:nowrap;">0 €</div>
<div style="left:490px;top:506.19px;width:132px;height:16px;font-size:13.3px;line-height:16px;text-align:center;color:#9c0006;font-weight:normal;white-space:nowrap;">6.000 €</div>
<div style="left:622px;top:506.19px;width:92px;height:16px;font-size:13.3px;line-height:16px;text-align:center;color:#9c5700;font-weight:normal;white-space:nowrap;">84.000 €</div>
<div style="left:714px;top:506.19px;width:146px;height:16px;font-size:13.3px;line-height:16px;text-align:center;color:#000;font-weight:normal;white-space:nowrap;">6.000 €</div>
<div style="left:860px;top:506.19px;width:150px;height:16px;font-size:13.3px;line-height:16px;text-align:center;color:#000;font-weight:normal;white-space:nowrap;">0,00 €</div>
<div style="left:1010px;top:506.19px;width:151px;height:16px;font-size:13.3px;line-height:16px;text-align:center;color:#000;font-weight:normal;white-space:nowrap;">500,00 €</div>
<div style="left:1187px;top:506.19px;width:108px;height:16px;font-size:13.3px;line-height:16px;text-align:center;color:#9c5700;font-weight:normal;white-space:nowrap;">-19.006 €</div>
<div style="left:1295px;top:506.19px;width:152px;height:16px;font-size:13.3px;line-height:16px;text-align:center;color:#000;font-weight:normal;white-space:nowrap;">-201.868 €</div>
<div style="left:17px;top:522px;width:351px;height:20px;background:#ffc000;"></div>
<div style="left:369px;top:522px;width:120px;height:20px;background:#e2efda;"></div>
<div style="left:489px;top:522px;width:132px;height:20px;background:#ffc7ce;"></div>
<div style="left:621px;top:522px;width:92px;height:20px;background:#ffeb9c;"></div>
<div style="left:1186px;top:522px;width:108px;height:20px;background:#ffeb9c;"></div>
<div style="left:18px;top:526.04px;width:221px;height:16px;font-size:13.75px;line-height:16px;text-align:center;color:#000;font-weight:normal;white-space:nowrap;">3. Laufzeit beendet</div>
<div style="left:239px;top:526.19px;width:42px;height:16px;font-size:13.3px;line-height:16px;text-align:center;color:#000;font-weight:normal;white-space:nowrap;">15</div>
<div style="left:281px;top:526.19px;width:88px;height:16px;font-size:13.3px;line-height:16px;text-align:center;color:#000;font-weight:normal;white-space:nowrap;">31.01.2037</div>
<div style="left:369px;top:526.19px;width:121px;height:16px;font-size:13.3px;line-height:16px;text-align:center;color:#000;font-weight:normal;white-space:nowrap;">0 €</div>
<div style="left:490px;top:526.19px;width:132px;height:16px;font-size:13.3px;line-height:16px;text-align:center;color:#9c0006;font-weight:normal;white-space:nowrap;">6.000 €</div>
<div style="left:622px;top:526.19px;width:92px;height:16px;font-size:13.3px;line-height:16px;text-align:center;color:#9c5700;font-weight:normal;white-space:nowrap;">90.000 €</div>
<div style="left:714px;top:526.19px;width:146px;height:16px;font-size:13.3px;line-height:16px;text-align:center;color:#000;font-weight:normal;white-space:nowrap;">6.000 €</div>
<div style="left:860px;top:526.19px;width:150px;height:16px;font-size:13.3px;line-height:16px;text-align:center;color:#000;font-weight:normal;white-space:nowrap;">0,00 €</div>
<div style="left:1010px;top:526.19px;width:151px;height:16px;font-size:13.3px;line-height:16px;text-align:center;color:#000;font-weight:normal;white-space:nowrap;">500,00 €</div>
<div style="left:1187px;top:526.19px;width:108px;height:16px;font-size:13.3px;line-height:16px;text-align:center;color:#9c5700;font-weight:normal;white-space:nowrap;">-19.170 €</div>
<div style="left:1295px;top:526.19px;width:152px;height:16px;font-size:13.3px;line-height:16px;text-align:center;color:#000;font-weight:normal;white-space:nowrap;">-221.038 €</div>
<div style="left:369px;top:542px;width:120px;height:20px;background:#e2efda;"></div>
<div style="left:489px;top:542px;width:132px;height:20px;background:#ffc7ce;"></div>
<div style="left:621px;top:542px;width:92px;height:20px;background:#ffeb9c;"></div>
<div style="left:1186px;top:542px;width:108px;height:20px;background:#ffeb9c;"></div>
<div style="left:18px;top:546.19px;width:221px;height:16px;font-size:13.3px;line-height:16px;text-align:center;color:#000;font-weight:normal;white-space:nowrap;">48</div>
<div style="left:239px;top:546.19px;width:42px;height:16px;font-size:13.3px;line-height:16px;text-align:center;color:#000;font-weight:normal;white-space:nowrap;">16</div>
<div style="left:281px;top:546.19px;width:88px;height:16px;font-size:13.3px;line-height:16px;text-align:center;color:#000;font-weight:normal;white-space:nowrap;">31.01.2038</div>
<div style="left:369px;top:546.19px;width:121px;height:16px;font-size:13.3px;line-height:16px;text-align:center;color:#000;font-weight:normal;white-space:nowrap;">0 €</div>
<div style="left:490px;top:546.19px;width:132px;height:16px;font-size:13.3px;line-height:16px;text-align:center;color:#9c0006;font-weight:normal;white-space:nowrap;">6.000 €</div>
<div style="left:622px;top:546.19px;width:92px;height:16px;font-size:13.3px;line-height:16px;text-align:center;color:#9c5700;font-weight:normal;white-space:nowrap;">96.000 €</div>
<div style="left:714px;top:546.19px;width:146px;height:16px;font-size:13.3px;line-height:16px;text-align:center;color:#000;font-weight:normal;white-space:nowrap;">6.000 €</div>
<div style="left:860px;top:546.19px;width:150px;height:16px;font-size:13.3px;line-height:16px;text-align:center;color:#000;font-weight:normal;white-space:nowrap;">0,00 €</div>
<div style="left:1010px;top:546.19px;width:151px;height:16px;font-size:13.3px;line-height:16px;text-align:center;color:#000;font-weight:normal;white-space:nowrap;">500,00 €</div>
<div style="left:1187px;top:546.19px;width:108px;height:16px;font-size:13.3px;line-height:16px;text-align:center;color:#9c5700;font-weight:normal;white-space:nowrap;">-39.220 €</div>
<div style="left:1295px;top:546.19px;width:152px;height:16px;font-size:13.3px;line-height:16px;text-align:center;color:#000;font-weight:normal;white-space:nowrap;">-260.257 €</div>
<div style="left:369px;top:562px;width:120px;height:19px;background:#e2efda;"></div>
<div style="left:489px;top:562px;width:132px;height:19px;background:#ffc7ce;"></div>
<div style="left:621px;top:562px;width:92px;height:19px;background:#ffeb9c;"></div>
<div style="left:1186px;top:562px;width:108px;height:19px;background:#ffeb9c;"></div>
<div style="left:18px;top:565.99px;width:221px;height:16px;font-size:13.3px;line-height:16px;text-align:center;color:#000;font-weight:normal;white-space:nowrap;">49</div>
<div style="left:239px;top:565.99px;width:42px;height:16px;font-size:13.3px;line-height:16px;text-align:center;color:#000;font-weight:normal;white-space:nowrap;">17</div>
<div style="left:281px;top:565.99px;width:88px;height:16px;font-size:13.3px;line-height:16px;text-align:center;color:#000;font-weight:normal;white-space:nowrap;">31.01.2039</div>
<div style="left:369px;top:565.99px;width:121px;height:16px;font-size:13.3px;line-height:16px;text-align:center;color:#000;font-weight:normal;white-space:nowrap;">0 €</div>
<div style="left:490px;top:565.99px;width:132px;height:16px;font-size:13.3px;line-height:16px;text-align:center;color:#9c0006;font-weight:normal;white-space:nowrap;">6.000 €</div>
<div style="left:622px;top:565.99px;width:92px;height:16px;font-size:13.3px;line-height:16px;text-align:center;color:#9c5700;font-weight:normal;white-space:nowrap;">102.000 €</div>
<div style="left:714px;top:565.99px;width:146px;height:16px;font-size:13.3px;line-height:16px;text-align:center;color:#000;font-weight:normal;white-space:nowrap;">6.000 €</div>
<div style="left:860px;top:565.99px;width:150px;height:16px;font-size:13.3px;line-height:16px;text-align:center;color:#000;font-weight:normal;white-space:nowrap;">0,00 €</div>
<div style="left:1010px;top:565.99px;width:151px;height:16px;font-size:13.3px;line-height:16px;text-align:center;color:#000;font-weight:normal;white-space:nowrap;">500,00 €</div>
<div style="left:1187px;top:565.99px;width:108px;height:16px;font-size:13.3px;line-height:16px;text-align:center;color:#9c5700;font-weight:normal;white-space:nowrap;">-39.693 €</div>
<div style="left:1295px;top:565.99px;width:152px;height:16px;font-size:13.3px;line-height:16px;text-align:center;color:#000;font-weight:normal;white-space:nowrap;">-299.951 €</div>
<div style="left:369px;top:581px;width:120px;height:19px;background:#e2efda;"></div>
<div style="left:489px;top:581px;width:132px;height:19px;background:#ffc7ce;"></div>
<div style="left:621px;top:581px;width:92px;height:19px;background:#ffeb9c;"></div>
<div style="left:1186px;top:581px;width:108px;height:19px;background:#ffeb9c;"></div>
<div style="left:18px;top:584.99px;width:221px;height:16px;font-size:13.3px;line-height:16px;text-align:center;color:#000;font-weight:normal;white-space:nowrap;">50</div>
<div style="left:239px;top:584.99px;width:42px;height:16px;font-size:13.3px;line-height:16px;text-align:center;color:#000;font-weight:normal;white-space:nowrap;">18</div>
<div style="left:281px;top:584.99px;width:88px;height:16px;font-size:13.3px;line-height:16px;text-align:center;color:#000;font-weight:normal;white-space:nowrap;">31.01.2040</div>
<div style="left:369px;top:584.99px;width:121px;height:16px;font-size:13.3px;line-height:16px;text-align:center;color:#000;font-weight:normal;white-space:nowrap;">0 €</div>
<div style="left:490px;top:584.99px;width:132px;height:16px;font-size:13.3px;line-height:16px;text-align:center;color:#9c0006;font-weight:normal;white-space:nowrap;">6.000 €</div>
<div style="left:622px;top:584.99px;width:92px;height:16px;font-size:13.3px;line-height:16px;text-align:center;color:#9c5700;font-weight:normal;white-space:nowrap;">108.000 €</div>
<div style="left:714px;top:584.99px;width:146px;height:16px;font-size:13.3px;line-height:16px;text-align:center;color:#000;font-weight:normal;white-space:nowrap;">6.000 €</div>
<div style="left:860px;top:584.99px;width:150px;height:16px;font-size:13.3px;line-height:16px;text-align:center;color:#000;font-weight:normal;white-space:nowrap;">0,00 €</div>
<div style="left:1010px;top:584.99px;width:151px;height:16px;font-size:13.3px;line-height:16px;text-align:center;color:#000;font-weight:normal;white-space:nowrap;">500,00 €</div>
<div style="left:1187px;top:584.99px;width:108px;height:16px;font-size:13.3px;line-height:16px;text-align:center;color:#9c5700;font-weight:normal;white-space:nowrap;">-40.176 €</div>
<div style="left:1295px;top:584.99px;width:152px;height:16px;font-size:13.3px;line-height:16px;text-align:center;color:#000;font-weight:normal;white-space:nowrap;">-340.127 €</div>
<div style="left:369px;top:600px;width:120px;height:20px;background:#e2efda;"></div>
<div style="left:489px;top:600px;width:132px;height:20px;background:#ffc7ce;"></div>
<div style="left:621px;top:600px;width:92px;height:20px;background:#ffeb9c;"></div>
<div style="left:1186px;top:600px;width:108px;height:20px;background:#ffeb9c;"></div>
<div style="left:18px;top:604.19px;width:221px;height:16px;font-size:13.3px;line-height:16px;text-align:center;color:#000;font-weight:normal;white-space:nowrap;">51</div>
<div style="left:239px;top:604.19px;width:42px;height:16px;font-size:13.3px;line-height:16px;text-align:center;color:#000;font-weight:normal;white-space:nowrap;">19</div>
<div style="left:281px;top:604.19px;width:88px;height:16px;font-size:13.3px;line-height:16px;text-align:center;color:#000;font-weight:normal;white-space:nowrap;">31.01.2041</div>
<div style="left:369px;top:604.19px;width:121px;height:16px;font-size:13.3px;line-height:16px;text-align:center;color:#000;font-weight:normal;white-space:nowrap;">0 €</div>
<div style="left:490px;top:604.19px;width:132px;height:16px;font-size:13.3px;line-height:16px;text-align:center;color:#9c0006;font-weight:normal;white-space:nowrap;">6.000 €</div>
<div style="left:622px;top:604.19px;width:92px;height:16px;font-size:13.3px;line-height:16px;text-align:center;color:#9c5700;font-weight:normal;white-space:nowrap;">114.000 €</div>
<div style="left:714px;top:604.19px;width:146px;height:16px;font-size:13.3px;line-height:16px;text-align:center;color:#000;font-weight:normal;white-space:nowrap;">6.000 €</div>
<div style="left:860px;top:604.19px;width:150px;height:16px;font-size:13.3px;line-height:16px;text-align:center;color:#000;font-weight:normal;white-space:nowrap;">0,00 €</div>
<div style="left:1010px;top:604.19px;width:151px;height:16px;font-size:13.3px;line-height:16px;text-align:center;color:#000;font-weight:normal;white-space:nowrap;">500,00 €</div>
<div style="left:1187px;top:604.19px;width:108px;height:16px;font-size:13.3px;line-height:16px;text-align:center;color:#9c5700;font-weight:normal;white-space:nowrap;">-40.669 €</div>
<div style="left:1295px;top:604.19px;width:152px;height:16px;font-size:13.3px;line-height:16px;text-align:center;color:#000;font-weight:normal;white-space:nowrap;">-380.796 €</div>
<div style="left:369px;top:620px;width:120px;height:20px;background:#e2efda;"></div>
<div style="left:489px;top:620px;width:132px;height:20px;background:#ffc7ce;"></div>
<div style="left:621px;top:620px;width:92px;height:20px;background:#ffeb9c;"></div>
<div style="left:1186px;top:620px;width:108px;height:20px;background:#ffeb9c;"></div>
<div style="left:18px;top:624.19px;width:221px;height:16px;font-size:13.3px;line-height:16px;text-align:center;color:#000;font-weight:normal;white-space:nowrap;">52</div>
<div style="left:239px;top:624.19px;width:42px;height:16px;font-size:13.3px;line-height:16px;text-align:center;color:#000;font-weight:normal;white-space:nowrap;">20</div>
<div style="left:281px;top:624.19px;width:88px;height:16px;font-size:13.3px;line-height:16px;text-align:center;color:#000;font-weight:normal;white-space:nowrap;">31.01.2042</div>
<div style="left:369px;top:624.19px;width:121px;height:16px;font-size:13.3px;line-height:16px;text-align:center;color:#000;font-weight:normal;white-space:nowrap;">0 €</div>
<div style="left:490px;top:624.19px;width:132px;height:16px;font-size:13.3px;line-height:16px;text-align:center;color:#9c0006;font-weight:normal;white-space:nowrap;">6.000 €</div>
<div style="left:622px;top:624.19px;width:92px;height:16px;font-size:13.3px;line-height:16px;text-align:center;color:#9c5700;font-weight:normal;white-space:nowrap;">120.000 €</div>
<div style="left:714px;top:624.19px;width:146px;height:16px;font-size:13.3px;line-height:16px;text-align:center;color:#000;font-weight:normal;white-space:nowrap;">6.000 €</div>
<div style="left:860px;top:624.19px;width:150px;height:16px;font-size:13.3px;line-height:16px;text-align:center;color:#000;font-weight:normal;white-space:nowrap;">0,00 €</div>
<div style="left:1010px;top:624.19px;width:151px;height:16px;font-size:13.3px;line-height:16px;text-align:center;color:#000;font-weight:normal;white-space:nowrap;">500,00 €</div>
<div style="left:1187px;top:624.19px;width:108px;height:16px;font-size:13.3px;line-height:16px;text-align:center;color:#9c5700;font-weight:normal;white-space:nowrap;">-41.172 €</div>
<div style="left:1295px;top:624.19px;width:152px;height:16px;font-size:13.3px;line-height:16px;text-align:center;color:#000;font-weight:normal;white-space:nowrap;">-421.969 €</div>
<div style="left:369px;top:640px;width:120px;height:20px;background:#e2efda;"></div>
<div style="left:489px;top:640px;width:132px;height:20px;background:#ffc7ce;"></div>
<div style="left:621px;top:640px;width:92px;height:20px;background:#ffeb9c;"></div>
<div style="left:1186px;top:640px;width:108px;height:20px;background:#ffeb9c;"></div>
<div style="left:18px;top:644.19px;width:221px;height:16px;font-size:13.3px;line-height:16px;text-align:center;color:#000;font-weight:normal;white-space:nowrap;">53</div>
<div style="left:239px;top:644.19px;width:42px;height:16px;font-size:13.3px;line-height:16px;text-align:center;color:#000;font-weight:normal;white-space:nowrap;">21</div>
<div style="left:281px;top:644.19px;width:88px;height:16px;font-size:13.3px;line-height:16px;text-align:center;color:#000;font-weight:normal;white-space:nowrap;">31.01.2043</div>
<div style="left:369px;top:644.19px;width:121px;height:16px;font-size:13.3px;line-height:16px;text-align:center;color:#000;font-weight:normal;white-space:nowrap;">0 €</div>
<div style="left:490px;top:644.19px;width:132px;height:16px;font-size:13.3px;line-height:16px;text-align:center;color:#9c0006;font-weight:normal;white-space:nowrap;">6.000 €</div>
<div style="left:622px;top:644.19px;width:92px;height:16px;font-size:13.3px;line-height:16px;text-align:center;color:#9c5700;font-weight:normal;white-space:nowrap;">126.000 €</div>
<div style="left:714px;top:644.19px;width:146px;height:16px;font-size:13.3px;line-height:16px;text-align:center;color:#000;font-weight:normal;white-space:nowrap;">6.000 €</div>
<div style="left:860px;top:644.19px;width:150px;height:16px;font-size:13.3px;line-height:16px;text-align:center;color:#000;font-weight:normal;white-space:nowrap;">0,00 €</div>
<div style="left:1010px;top:644.19px;width:151px;height:16px;font-size:13.3px;line-height:16px;text-align:center;color:#000;font-weight:normal;white-space:nowrap;">500,00 €</div>
<div style="left:1187px;top:644.19px;width:108px;height:16px;font-size:13.3px;line-height:16px;text-align:center;color:#9c5700;font-weight:normal;white-space:nowrap;">-41.685 €</div>
<div style="left:1295px;top:644.19px;width:152px;height:16px;font-size:13.3px;line-height:16px;text-align:center;color:#000;font-weight:normal;white-space:nowrap;">-463.653 €</div>
<div style="left:369px;top:660px;width:120px;height:19px;background:#e2efda;"></div>
<div style="left:489px;top:660px;width:132px;height:19px;background:#ffc7ce;"></div>
<div style="left:621px;top:660px;width:92px;height:19px;background:#ffeb9c;"></div>
<div style="left:1186px;top:660px;width:108px;height:19px;background:#ffeb9c;"></div>
<div style="left:18px;top:663.99px;width:221px;height:16px;font-size:13.3px;line-height:16px;text-align:center;color:#000;font-weight:normal;white-space:nowrap;">54</div>
<div style="left:239px;top:663.99px;width:42px;height:16px;font-size:13.3px;line-height:16px;text-align:center;color:#000;font-weight:normal;white-space:nowrap;">22</div>
<div style="left:281px;top:663.99px;width:88px;height:16px;font-size:13.3px;line-height:16px;text-align:center;color:#000;font-weight:normal;white-space:nowrap;">31.01.2044</div>
<div style="left:369px;top:663.99px;width:121px;height:16px;font-size:13.3px;line-height:16px;text-align:center;color:#000;font-weight:normal;white-space:nowrap;">0 €</div>
<div style="left:490px;top:663.99px;width:132px;height:16px;font-size:13.3px;line-height:16px;text-align:center;color:#9c0006;font-weight:normal;white-space:nowrap;">6.000 €</div>
<div style="left:622px;top:663.99px;width:92px;height:16px;font-size:13.3px;line-height:16px;text-align:center;color:#9c5700;font-weight:normal;white-space:nowrap;">132.000 €</div>
<div style="left:714px;top:663.99px;width:146px;height:16px;font-size:13.3px;line-height:16px;text-align:center;color:#000;font-weight:normal;white-space:nowrap;">6.000 €</div>
<div style="left:860px;top:663.99px;width:150px;height:16px;font-size:13.3px;line-height:16px;text-align:center;color:#000;font-weight:normal;white-space:nowrap;">0,00 €</div>
<div style="left:1010px;top:663.99px;width:151px;height:16px;font-size:13.3px;line-height:16px;text-align:center;color:#000;font-weight:normal;white-space:nowrap;">500,00 €</div>
<div style="left:1187px;top:663.99px;width:108px;height:16px;font-size:13.3px;line-height:16px;text-align:center;color:#9c5700;font-weight:normal;white-space:nowrap;">-42.208 €</div>
<div style="left:1295px;top:663.99px;width:152px;height:16px;font-size:13.3px;line-height:16px;text-align:center;color:#000;font-weight:normal;white-space:nowrap;">-505.861 €</div>
<div style="left:17px;top:679px;width:351px;height:19px;background:#ffc000;"></div>
<div style="left:369px;top:679px;width:120px;height:19px;background:#e2efda;"></div>
<div style="left:489px;top:679px;width:132px;height:19px;background:#ffc7ce;"></div>
<div style="left:621px;top:679px;width:92px;height:19px;background:#ffeb9c;"></div>
<div style="left:1186px;top:679px;width:108px;height:19px;background:#ffeb9c;"></div>
<div style="left:18px;top:682.84px;width:221px;height:16px;font-size:13.75px;line-height:16px;text-align:center;color:#000;font-weight:normal;white-space:nowrap;">4. Laufzeit beendet</div>
<div style="left:239px;top:682.99px;width:42px;height:16px;font-size:13.3px;line-height:16px;text-align:center;color:#000;font-weight:normal;white-space:nowrap;">23</div>
<div style="left:281px;top:682.99px;width:88px;height:16px;font-size:13.3px;line-height:16px;text-align:center;color:#000;font-weight:normal;white-space:nowrap;">31.01.2045</div>
<div style="left:369px;top:682.99px;width:121px;height:16px;font-size:13.3px;line-height:16px;text-align:center;color:#000;font-weight:normal;white-space:nowrap;">0 €</div>
<div style="left:490px;top:682.99px;width:132px;height:16px;font-size:13.3px;line-height:16px;text-align:center;color:#9c0006;font-weight:normal;white-space:nowrap;">6.000 €</div>
<div style="left:622px;top:682.99px;width:92px;height:16px;font-size:13.3px;line-height:16px;text-align:center;color:#9c5700;font-weight:normal;white-space:nowrap;">138.000 €</div>
<div style="left:714px;top:682.99px;width:146px;height:16px;font-size:13.3px;line-height:16px;text-align:center;color:#000;font-weight:normal;white-space:nowrap;">6.000 €</div>
<div style="left:860px;top:682.99px;width:150px;height:16px;font-size:13.3px;line-height:16px;text-align:center;color:#000;font-weight:normal;white-space:nowrap;">0,00 €</div>
<div style="left:1010px;top:682.99px;width:151px;height:16px;font-size:13.3px;line-height:16px;text-align:center;color:#000;font-weight:normal;white-space:nowrap;">500,00 €</div>
<div style="left:1187px;top:682.99px;width:108px;height:16px;font-size:13.3px;line-height:16px;text-align:center;color:#9c5700;font-weight:normal;white-space:nowrap;">-42.741 €</div>
<div style="left:1295px;top:682.99px;width:152px;height:16px;font-size:13.3px;line-height:16px;text-align:center;color:#000;font-weight:normal;white-space:nowrap;">-548.603 €</div>
<div style="left:369px;top:698px;width:120px;height:20px;background:#c6efce;"></div>
<div style="left:489px;top:698px;width:132px;height:20px;background:#c6efce;"></div>
<div style="left:621px;top:698px;width:92px;height:20px;background:#ffeb9c;"></div>
<div style="left:1186px;top:698px;width:108px;height:20px;background:#00b050;"></div>
<div style="left:18px;top:702.19px;width:221px;height:16px;font-size:13.3px;line-height:16px;text-align:center;color:#000;font-weight:normal;white-space:nowrap;">56</div>
<div style="left:239px;top:702.19px;width:42px;height:16px;font-size:13.3px;line-height:16px;text-align:center;color:#000;font-weight:normal;white-space:nowrap;">24</div>
<div style="left:281px;top:702.19px;width:88px;height:16px;font-size:13.3px;line-height:16px;text-align:center;color:#000;font-weight:normal;white-space:nowrap;">31.01.2046</div>
<div style="left:369px;top:702.19px;width:121px;height:16px;font-size:13.3px;line-height:16px;text-align:center;color:#00b050;font-weight:normal;white-space:nowrap;">6.000 €</div>
<div style="left:490px;top:702.19px;width:132px;height:16px;font-size:13.3px;line-height:16px;text-align:center;color:#006100;font-weight:normal;white-space:nowrap;">0 €</div>
<div style="left:622px;top:702.19px;width:92px;height:16px;font-size:13.3px;line-height:16px;text-align:center;color:#9c5700;font-weight:normal;white-space:nowrap;">138.000 €</div>
<div style="left:714px;top:702.19px;width:146px;height:16px;font-size:13.3px;line-height:16px;text-align:center;color:#000;font-weight:normal;white-space:nowrap;">6.000 €</div>
<div style="left:860px;top:702.19px;width:150px;height:16px;font-size:13.3px;line-height:16px;text-align:center;color:#000;font-weight:normal;white-space:nowrap;">500,00 €</div>
<div style="left:1010px;top:702.19px;width:151px;height:16px;font-size:13.3px;line-height:16px;text-align:center;color:#000;font-weight:normal;white-space:nowrap;">0,00 €</div>
<div style="left:1187px;top:702.19px;width:108px;height:16px;font-size:13.3px;line-height:16px;text-align:center;color:#ffffff;font-weight:normal;white-space:nowrap;">14.801 €</div>
<div style="left:1295px;top:702.19px;width:152px;height:16px;font-size:13.3px;line-height:16px;text-align:center;color:#000;font-weight:normal;white-space:nowrap;">-533.801 €</div>
<div style="left:369px;top:718px;width:120px;height:21px;background:#c6efce;"></div>
<div style="left:489px;top:718px;width:132px;height:21px;background:#c6efce;"></div>
<div style="left:621px;top:718px;width:92px;height:21px;background:#ffeb9c;"></div>
<div style="left:1186px;top:718px;width:108px;height:21px;background:#00b050;"></div>
<div style="left:18px;top:722.39px;width:221px;height:16px;font-size:13.3px;line-height:16px;text-align:center;color:#000;font-weight:normal;white-space:nowrap;">57</div>
<div style="left:239px;top:722.39px;width:42px;height:16px;font-size:13.3px;line-height:16px;text-align:center;color:#000;font-weight:normal;white-space:nowrap;">25</div>
<div style="left:281px;top:722.39px;width:88px;height:16px;font-size:13.3px;line-height:16px;text-align:center;color:#000;font-weight:normal;white-space:nowrap;">31.01.2047</div>
<div style="left:369px;top:722.39px;width:121px;height:16px;font-size:13.3px;line-height:16px;text-align:center;color:#00b050;font-weight:normal;white-space:nowrap;">6.000 €</div>
<div style="left:490px;top:722.39px;width:132px;height:16px;font-size:13.3px;line-height:16px;text-align:center;color:#006100;font-weight:normal;white-space:nowrap;">0 €</div>
<div style="left:622px;top:722.39px;width:92px;height:16px;font-size:13.3px;line-height:16px;text-align:center;color:#9c5700;font-weight:normal;white-space:nowrap;">138.000 €</div>
<div style="left:714px;top:722.39px;width:146px;height:16px;font-size:13.3px;line-height:16px;text-align:center;color:#000;font-weight:normal;white-space:nowrap;">6.000 €</div>
<div style="left:860px;top:722.39px;width:150px;height:16px;font-size:13.3px;line-height:16px;text-align:center;color:#000;font-weight:normal;white-space:nowrap;">500,00 €</div>
<div style="left:1010px;top:722.39px;width:151px;height:16px;font-size:13.3px;line-height:16px;text-align:center;color:#000;font-weight:normal;white-space:nowrap;">0,00 €</div>
<div style="left:1187px;top:722.39px;width:108px;height:16px;font-size:13.3px;line-height:16px;text-align:center;color:#ffffff;font-weight:normal;white-space:nowrap;">14.734 €</div>
<div style="left:1295px;top:722.39px;width:152px;height:16px;font-size:13.3px;line-height:16px;text-align:center;color:#000;font-weight:normal;white-space:nowrap;">-519.067 €</div>
<div style="left:17px;top:233px;width:1144px;height:1px;background:#444444;"></div>
<div style="left:1186px;top:233px;width:261px;height:1px;background:#5b7db5;"></div>
<div style="left:17px;top:254px;width:1144px;height:1px;background:#444444;"></div>
<div style="left:1186px;top:254px;width:261px;height:1px;background:#444444;"></div>
<div style="left:17px;top:275px;width:1144px;height:1px;background:#444444;"></div>
<div style="left:1186px;top:275px;width:261px;height:1px;background:#444444;"></div>
<div style="left:17px;top:295px;width:1144px;height:1px;background:#444444;"></div>
<div style="left:1186px;top:295px;width:261px;height:1px;background:#444444;"></div>
<div style="left:17px;top:316px;width:1144px;height:1px;background:#444444;"></div>
<div style="left:1186px;top:316px;width:261px;height:1px;background:#444444;"></div>
<div style="left:17px;top:336px;width:1144px;height:1px;background:#444444;"></div>
<div style="left:1186px;top:336px;width:261px;height:1px;background:#444444;"></div>
<div style="left:17px;top:357px;width:1144px;height:1px;background:#444444;"></div>
<div style="left:1186px;top:357px;width:261px;height:1px;background:#444444;"></div>
<div style="left:17px;top:378px;width:1144px;height:1px;background:#444444;"></div>
<div style="left:1186px;top:378px;width:261px;height:1px;background:#444444;"></div>
<div style="left:17px;top:398px;width:1144px;height:1px;background:#444444;"></div>
<div style="left:1186px;top:398px;width:261px;height:1px;background:#444444;"></div>
<div style="left:17px;top:419px;width:1144px;height:1px;background:#444444;"></div>
<div style="left:1186px;top:419px;width:261px;height:1px;background:#444444;"></div>
<div style="left:17px;top:440px;width:1144px;height:1px;background:#444444;"></div>
<div style="left:1186px;top:440px;width:261px;height:1px;background:#444444;"></div>
<div style="left:17px;top:460px;width:1144px;height:1px;background:#444444;"></div>
<div style="left:1186px;top:460px;width:261px;height:1px;background:#444444;"></div>
<div style="left:17px;top:481px;width:1144px;height:1px;background:#444444;"></div>
<div style="left:1186px;top:481px;width:261px;height:1px;background:#444444;"></div>
<div style="left:17px;top:502px;width:1144px;height:1px;background:#444444;"></div>
<div style="left:1186px;top:502px;width:261px;height:1px;background:#444444;"></div>
<div style="left:17px;top:522px;width:1144px;height:1px;background:#444444;"></div>
<div style="left:1186px;top:522px;width:261px;height:1px;background:#444444;"></div>
<div style="left:17px;top:542px;width:1144px;height:1px;background:#444444;"></div>
<div style="left:1186px;top:542px;width:261px;height:1px;background:#444444;"></div>
<div style="left:17px;top:562px;width:1144px;height:1px;background:#444444;"></div>
<div style="left:1186px;top:562px;width:261px;height:1px;background:#444444;"></div>
<div style="left:17px;top:581px;width:1144px;height:1px;background:#444444;"></div>
<div style="left:1186px;top:581px;width:261px;height:1px;background:#444444;"></div>
<div style="left:17px;top:600px;width:1144px;height:1px;background:#444444;"></div>
<div style="left:1186px;top:600px;width:261px;height:1px;background:#444444;"></div>
<div style="left:17px;top:620px;width:1144px;height:1px;background:#444444;"></div>
<div style="left:1186px;top:620px;width:261px;height:1px;background:#444444;"></div>
<div style="left:17px;top:640px;width:1144px;height:1px;background:#444444;"></div>
<div style="left:1186px;top:640px;width:261px;height:1px;background:#444444;"></div>
<div style="left:17px;top:660px;width:1144px;height:1px;background:#444444;"></div>
<div style="left:1186px;top:660px;width:261px;height:1px;background:#444444;"></div>
<div style="left:17px;top:679px;width:1144px;height:1px;background:#444444;"></div>
<div style="left:1186px;top:679px;width:261px;height:1px;background:#444444;"></div>
<div style="left:17px;top:698px;width:1144px;height:1px;background:#444444;"></div>
<div style="left:1186px;top:698px;width:261px;height:1px;background:#444444;"></div>
<div style="left:17px;top:718px;width:1144px;height:1px;background:#444444;"></div>
<div style="left:1186px;top:718px;width:261px;height:1px;background:#444444;"></div>
<div style="left:1186px;top:233px;width:108px;height:1px;background:#5b7db5;"></div>
<div style="left:17px;top:233px;width:1px;height:497px;background:#444444;"></div>
<div style="left:238px;top:233px;width:1px;height:497px;background:#444444;"></div>
<div style="left:280px;top:233px;width:1px;height:497px;background:#444444;"></div>
<div style="left:489px;top:233px;width:1px;height:497px;background:#444444;"></div>
<div style="left:621px;top:233px;width:1px;height:497px;background:#444444;"></div>
<div style="left:713px;top:233px;width:1px;height:497px;background:#444444;"></div>
<div style="left:859px;top:233px;width:1px;height:497px;background:#444444;"></div>
<div style="left:1009px;top:233px;width:1px;height:497px;background:#444444;"></div>
<div style="left:1160px;top:233px;width:1px;height:497px;background:#444444;"></div>
<div style="left:1186px;top:233px;width:1px;height:497px;background:#444444;"></div>
<div style="left:1294px;top:233px;width:1px;height:497px;background:#444444;"></div>
<div style="left:1446px;top:233px;width:1px;height:497px;background:#444444;"></div>
<div style="left:1160px;top:72px;width:1px;height:25px;background:#3c3c3c;"></div>
<div style="left:1186px;top:72px;width:1px;height:658px;background:#3c3c3c;"></div>
<div style="left:1160px;top:181px;width:1px;height:549px;background:#444444;"></div>
<div style="left:1446px;top:72px;width:1px;height:25px;background:#444444;"></div>
<div style="left:1294px;top:181px;width:1px;height:52px;background:#444444;"></div>
<div style="left:1446px;top:181px;width:1px;height:52px;background:#444444;"></div>
<div style="left:17px;top:233px;width:1px;height:497px;background:#444444;"></div>
<div style="left:368px;top:72px;width:1px;height:658px;background:#c55a11;"></div>
<div style="left:0px;top:730px;width:308px;height:1px;background:#b8b8b8;"></div>
<div style="left:0px;top:731px;width:308px;height:1px;background:#ebebeb;"></div>
<div style="left:308px;top:730px;width:156px;height:2px;background:#ffffff;"></div>
<div style="left:464px;top:730px;width:988px;height:1px;background:#b8b8b8;"></div>
<div style="left:464px;top:731px;width:988px;height:1px;background:#efefef;"></div>
</div><svg style="position:absolute;left:5px;top:4px" width="49" height="41" viewBox="0 0 49 41">
<path d="M12.2 12.2 L24.1 4.1 L31 8.6 M36 12.4 L31 8.6" fill="none" stroke="#2b2b2b" stroke-width="2.3" stroke-linejoin="miter"/>
<rect x="29.8" y="3" width="2.5" height="7" fill="#2b2b2b"/>
<rect x="23.6" y="10.4" width="1.1" height="1.1" fill="#888"/>
<path d="M16.1 11.2 L19 11.2 L19 24.4 L22.5 24.4 L22.5 26.7 L16.1 26.7 Z" fill="#b41e18"/>
<path d="M17.2 11.2 L20.6 11.2 L29.4 21.8 L29.4 11.2 L32.3 11.2 L32.3 26.7 L29.6 26.7 Z" fill="#b41e18"/>
<path d="M5 29.4 Q24 27.2 44 29.6" fill="none" stroke="#d8c4c4" stroke-width="0.9"/>
<text x="5.2" y="35.8" font-family="Liberation Sans" font-size="6.2" font-weight="bold" fill="#3a3a3a" textLength="14" lengthAdjust="spacingAndGlyphs">Zefaj</text>
<text x="20.8" y="35.8" font-family="Liberation Sans" font-size="5.6" fill="#b41e18" textLength="23.8" lengthAdjust="spacingAndGlyphs">Immobilien</text>
</svg></body></html>
